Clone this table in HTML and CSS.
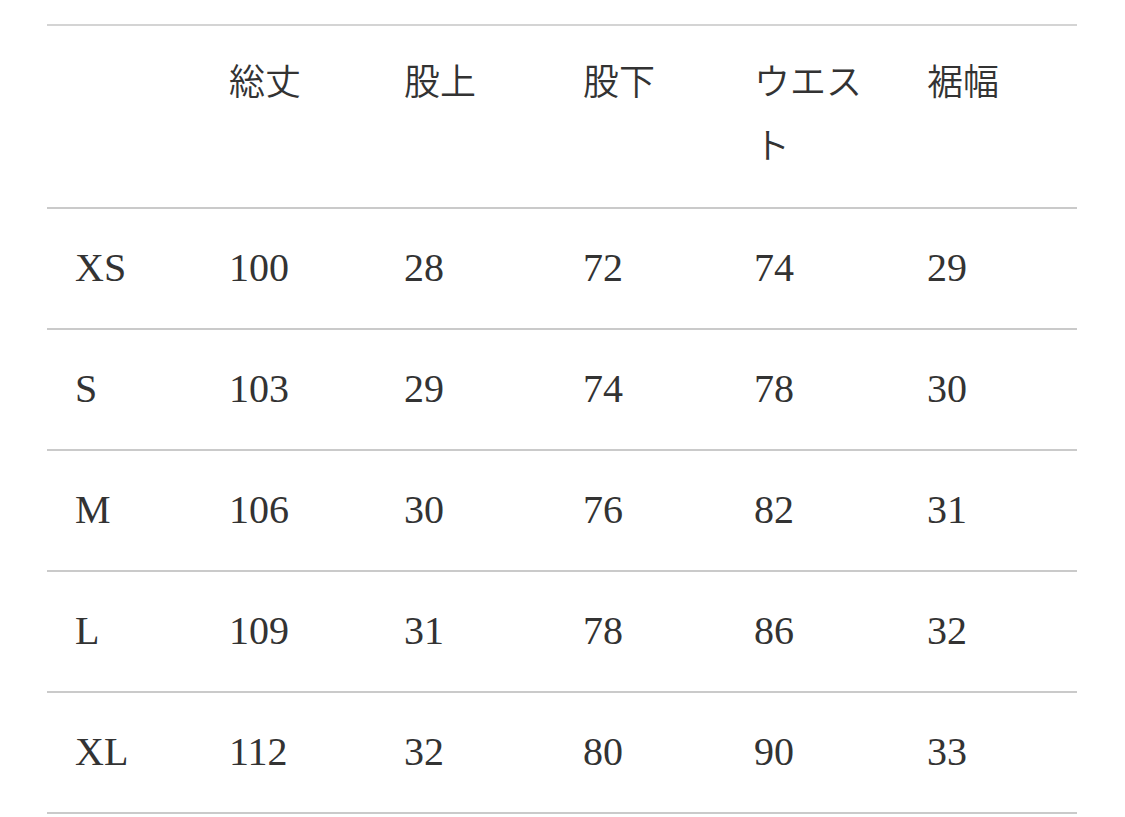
FILE: index.html
```html
<!DOCTYPE html>
<html lang="ja">
<head>
<meta charset="utf-8">
<title>サイズ表</title>
<link rel="stylesheet" href="styles.css">
</head>
<body>
<table class="size-table">
  <colgroup>
    <col class="c1"><col class="c2"><col class="c3"><col class="c4"><col class="c5"><col class="c6">
  </colgroup>
  <thead>
    <tr><th></th><th>総丈</th><th>股上</th><th>股下</th><th>ウエスト</th><th>裾幅</th></tr>
  </thead>
  <tbody>
    <tr><td>XS</td><td>100</td><td>28</td><td>72</td><td>74</td><td>29</td></tr>
    <tr><td>S</td><td>103</td><td>29</td><td>74</td><td>78</td><td>30</td></tr>
    <tr><td>M</td><td>106</td><td>30</td><td>76</td><td>82</td><td>31</td></tr>
    <tr><td>L</td><td>109</td><td>31</td><td>78</td><td>86</td><td>32</td></tr>
    <tr><td>XL</td><td>112</td><td>32</td><td>80</td><td>90</td><td>33</td></tr>
  </tbody>
</table>
</body>
</html>
```
FILE: styles.css
```css
html, body {
  margin: 0;
  padding: 0;
  background: #ffffff;
}
body {
  padding: 24px 0 0 47px;
}
.size-table {
  width: 1030px;
  table-layout: fixed;
  border-collapse: separate;
  border-spacing: 0;
  font-family: "Liberation Serif", "Noto Sans CJK JP", serif;
  font-size: 40px;
  line-height: 64px;
  color: #333333;
}
.c1 { width: 154px; }
.c2 { width: 175px; }
.c3 { width: 179px; }
.c4 { width: 171px; }
.c5 { width: 173px; }
.c6 { width: 178px; }
.size-table th,
.size-table td {
  text-align: left;
  vertical-align: top;
  font-weight: normal;
  padding: 27px 20px 28px 28px;
  border-bottom: 2px solid #cacaca;
}
.size-table th {
  font-family: "Noto Sans CJK JP", sans-serif;
  font-size: 36px;
  font-weight: 350;
  border-top: 2px solid #d4d4d4;
  padding-top: 21px;
  padding-bottom: 32px;
  color: #333333;
}
```
